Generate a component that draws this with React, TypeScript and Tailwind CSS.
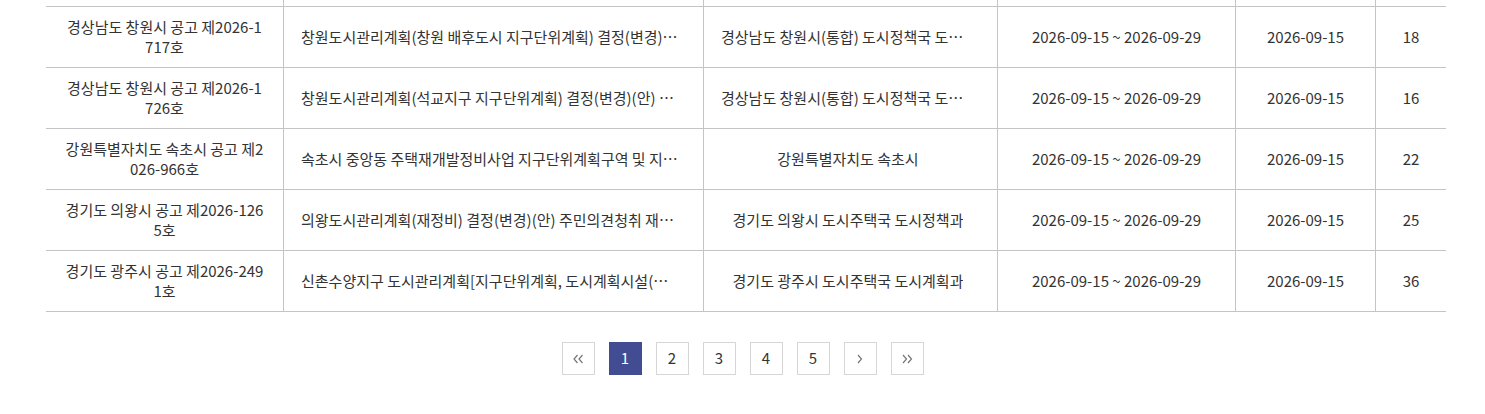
import React from "react"

type Notice = {
  no: string
  title: string
  dept: string
  period: string
  date: string
  views: number
}

const notices: Notice[] = [
  {
    no: "경상남도 창원시 공고 제2026-1717호",
    title: "창원도시관리계획(창원 배후도시 지구단위계획) 결정(변경)(안) 주민의견청취 재공고",
    dept: "경상남도 창원시(통합) 도시정책국 도시계획과",
    period: "2026-09-15 ~ 2026-09-29",
    date: "2026-09-15",
    views: 18,
  },
  {
    no: "경상남도 창원시 공고 제2026-1726호",
    title: "창원도시관리계획(석교지구 지구단위계획) 결정(변경)(안) 주민의견청취 공고",
    dept: "경상남도 창원시(통합) 도시정책국 도시계획과",
    period: "2026-09-15 ~ 2026-09-29",
    date: "2026-09-15",
    views: 16,
  },
  {
    no: "강원특별자치도 속초시 공고 제2026-966호",
    title: "속초시 중앙동 주택재개발정비사업 지구단위계획구역 및 지구단위계획 결정(안) 공고",
    dept: "강원특별자치도 속초시",
    period: "2026-09-15 ~ 2026-09-29",
    date: "2026-09-15",
    views: 22,
  },
  {
    no: "경기도 의왕시 공고 제2026-1265호",
    title: "의왕도시관리계획(재정비) 결정(변경)(안) 주민의견청취 재공고",
    dept: "경기도 의왕시 도시주택국 도시정책과",
    period: "2026-09-15 ~ 2026-09-29",
    date: "2026-09-15",
    views: 25,
  },
  {
    no: "경기도 광주시 공고 제2026-2491호",
    title: "신촌수양지구 도시관리계획[지구단위계획, 도시계획시설(도로)] 결정(변경)(안) 열람공고",
    dept: "경기도 광주시 도시주택국 도시계획과",
    period: "2026-09-15 ~ 2026-09-29",
    date: "2026-09-15",
    views: 36,
  },
]

const cols = "grid grid-cols-[238px_420px_294px_238px_140px_70px]"
const cell = "border-r border-[#c4c4c4] flex items-center"

function Chevron({ dir, double }: { dir: "left" | "right"; double?: boolean }) {
  const pts = dir === "left" ? "4.5,1 1,5 4.5,9" : "1,1 4.5,5 1,9"
  return (
    <svg width={double ? 11 : 6} height="10" viewBox={double ? "0 0 11 10" : "0 0 6 10"} fill="none">
      <polyline points={pts} stroke="#777" strokeWidth="1.2" />
      {double && (
        <polyline
          points={dir === "left" ? "9.5,1 6,5 9.5,9" : "6,1 9.5,5 6,9"}
          stroke="#777"
          strokeWidth="1.2"
        />
      )}
    </svg>
  )
}

export default function App() {
  return (
    <div
      className="w-[1485px] h-[414px] bg-white text-[15px] text-[#333] overflow-hidden"
      style={{ fontFamily: '"Noto Sans CJK KR", "Noto Sans", sans-serif' }}
    >
      <div className="ml-[46px] w-[1400px]">
        {/* tail of previous row */}
        <div className={`${cols} h-[7px] border-b border-[#c4c4c4]`}>
          <div className={cell} />
          <div className={cell} />
          <div className={cell} />
          <div className={cell} />
          <div className={cell} />
          <div />
        </div>
        {notices.map((n) => (
          <div key={n.no} className={`${cols} h-[61px] border-b border-[#c4c4c4]`}>
            <div className={`${cell} justify-center px-[18px] text-center leading-[20px] break-all`}>
              {n.no}
            </div>
            <div className={`${cell} pl-[17px] pr-[21px] min-w-0`}>
              <span className="truncate">{n.title}</span>
            </div>
            <div className={`${cell} justify-center pl-[17px] pr-[22px] min-w-0`}>
              <span className="truncate">{n.dept}</span>
            </div>
            <div className={`${cell} justify-center`}>{n.period}</div>
            <div className={`${cell} justify-center`}>{n.date}</div>
            <div className="flex items-center justify-center">{n.views}</div>
          </div>
        ))}
      </div>

      <div className="mt-[30px] flex justify-center gap-[14px]">
        <button className="w-[33px] h-[33px] border border-[#d6d6d6] flex items-center justify-center">
          <Chevron dir="left" double />
        </button>
        {[1, 2, 3, 4, 5].map((p) => (
          <button
            key={p}
            className={
              p === 1
                ? "w-[33px] h-[33px] bg-[#424c92] text-white flex items-center justify-center"
                : "w-[33px] h-[33px] border border-[#d6d6d6] text-[#333] flex items-center justify-center"
            }
          >
            {p}
          </button>
        ))}
        <button className="w-[33px] h-[33px] border border-[#d6d6d6] flex items-center justify-center">
          <Chevron dir="right" />
        </button>
        <button className="w-[33px] h-[33px] border border-[#d6d6d6] flex items-center justify-center">
          <Chevron dir="right" double />
        </button>
      </div>
    </div>
  )
}
